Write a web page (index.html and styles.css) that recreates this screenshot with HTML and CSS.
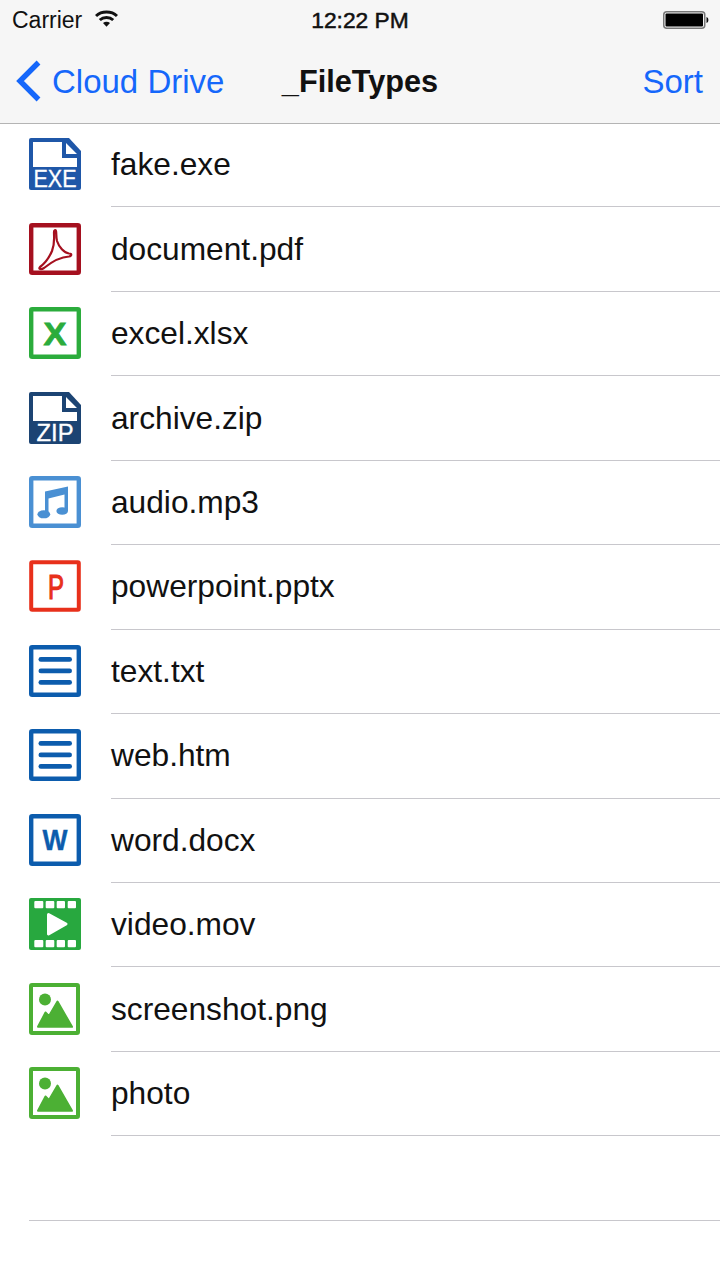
FILE: index.html
```html
<!DOCTYPE html>
<html lang="en">
<head>
    <meta charset="UTF-8">
    <meta name="viewport" content="width=device-width, initial-scale=1.0">
    <title>_FileTypes</title>
    <link rel="stylesheet" href="styles.css">
</head>
<body>

    <svg class="defs" width="0" height="0">
        <symbol id="icon-lines" viewBox="0 0 52 52">
            <rect x="2.200" y="2.200" width="47.600" height="47.600" rx="1" fill="none" stroke="#0c5cad" stroke-width="4.400"/>
            <rect x="9.500" y="12" width="33.500" height="4.800" rx="2.400" fill="#0c5cad"/>
            <rect x="9.500" y="23.500" width="33.500" height="4.800" rx="2.400" fill="#0c5cad"/>
            <rect x="9.500" y="35" width="33.500" height="4.800" rx="2.400" fill="#0c5cad"/>
        </symbol>
        <symbol id="icon-image" viewBox="0 0 52 52">
            <rect x="2" y="2" width="47" height="48" rx="1" fill="none" stroke="#4cb034" stroke-width="4"/>
            <circle cx="16" cy="16.500" r="6" fill="#4cb034"/>
            <path d="M9 43.800 L16.500 29.500 L20 33 L28.500 18.500 L43 43.800 Z" fill="#4cb034" stroke="#4cb034" stroke-width="2" stroke-linejoin="round"/>
        </symbol>
    </svg>

    <div class="screen">
        <header class="topbar">
            <div class="status">
                <div class="status-left">
                    <span>Carrier</span>
                    <svg class="wifi" width="23" height="17" viewBox="0 0 23 17">
                        <path d="M1 6 C6.500 0.800 16.500 0.800 22 6" fill="none" stroke="#111" stroke-width="3"/>
                        <path d="M4.800 10 C8.500 6.700 14.500 6.700 18.200 10" fill="none" stroke="#111" stroke-width="3"/>
                        <path d="M8 13 C10 11.200 13 11.200 15 13 L11.500 16.800 Z" fill="#111"/>
                    </svg>
                </div>
                <div class="status-time">12:22 PM</div>
                <div class="status-right">
                    <svg width="46" height="18" viewBox="0 0 46 18">
                        <rect x="0.750" y="0.750" width="41" height="16.500" rx="3" fill="none" stroke="#777" stroke-width="1.500"/>
                        <rect x="2.500" y="2.500" width="37.500" height="13" rx="1" fill="#000"/>
                        <path d="M43.500 6 C46 6.500 46 11.500 43.500 12 Z" fill="#111"/>
                    </svg>
                </div>
            </div>
            <nav class="navbar">
                <a class="nav-back">
                    <svg class="chevron" width="26" height="42" viewBox="0 0 26 42">
                        <path d="M23.500 2.500 L5 21 L23.500 39.500" fill="none" stroke="#1567fb" stroke-width="5.400"/>
                    </svg>
                    <span>Cloud Drive</span>
                </a>
                <div class="nav-title">_FileTypes</div>
                <a class="nav-action">Sort</a>
            </nav>
        </header>

        <ul class="file-list">
            <li class="file-row">
                <svg class="file-icon" viewBox="0 0 52 52">
                    <path d="M2 0 H40 L52 13 V50 A2 2 0 0 1 50 52 H2 A2 2 0 0 1 0 50 V2 A2 2 0 0 1 2 0 Z" fill="#1f57a8"/>
                    <path d="M4 4 H33 V20 H48 V29 H4 Z M37 5 L48 16 H37 Z" fill="#fff"/>
                    <text class="icon-label" x="26" y="49" text-anchor="middle" font-size="23" textLength="43" lengthAdjust="spacingAndGlyphs" fill="#fff" stroke="#fff" stroke-width="0.300">EXE</text>
                </svg>
                <div class="file-name">fake.exe</div>
            </li>
            <li class="file-row">
                <svg class="file-icon" viewBox="0 0 52 52">
                    <rect x="2.200" y="2.200" width="47.600" height="47.600" rx="1" fill="none" stroke="#a5101f" stroke-width="4.400"/>
                    <path d="M25 9 C25 16 26 20 23 28 C20 35 15 41 11 44 C9 46 12 47 15 45 C20 41 30 34 40 33.500 C43 33 43 30.500 40 30.500 C35 30 30 24 28 18 C27 14 27.500 10 27 8 C26.500 6.500 25 7 25 9 Z" fill="none" stroke="#a5101f" stroke-width="2.200"/>
                </svg>
                <div class="file-name">document.pdf</div>
            </li>
            <li class="file-row">
                <svg class="file-icon" viewBox="0 0 52 52">
                    <rect x="2.200" y="2.200" width="47.600" height="47.600" rx="1" fill="none" stroke="#2bac3c" stroke-width="4.400"/>
                    <text class="icon-label icon-bold" x="26" y="37.500" text-anchor="middle" font-size="32" textLength="23" lengthAdjust="spacingAndGlyphs" fill="#2bac3c" stroke="#2bac3c" stroke-width="0.800">X</text>
                </svg>
                <div class="file-name">excel.xlsx</div>
            </li>
            <li class="file-row">
                <svg class="file-icon" viewBox="0 0 52 52">
                    <path d="M2 0 H40 L52 13 V50 A2 2 0 0 1 50 52 H2 A2 2 0 0 1 0 50 V2 A2 2 0 0 1 2 0 Z" fill="#1c4473"/>
                    <path d="M4 4 H33 V20 H48 V29 H4 Z M37 5 L48 16 H37 Z" fill="#fff"/>
                    <text class="icon-label" x="26" y="49" text-anchor="middle" font-size="23" textLength="37" lengthAdjust="spacingAndGlyphs" fill="#fff" stroke="#fff" stroke-width="0.300">ZIP</text>
                </svg>
                <div class="file-name">archive.zip</div>
            </li>
            <li class="file-row">
                <svg class="file-icon" viewBox="0 0 52 52">
                    <rect x="2.200" y="2.200" width="47.600" height="47.600" rx="1" fill="none" stroke="#4a90d3" stroke-width="4.400"/>
                    <path d="M16 15.500 L39 10.500 V35 H35.500 V18.500 L19.500 22.500 V38.500 H16 Z" fill="#4a90d3"/>
                    <ellipse cx="14.800" cy="38.300" rx="6.400" ry="4" fill="#4a90d3"/>
                    <ellipse cx="33.200" cy="35" rx="5.800" ry="3.800" fill="#4a90d3"/>
                </svg>
                <div class="file-name">audio.mp3</div>
            </li>
            <li class="file-row">
                <svg class="file-icon" viewBox="0 0 52 52">
                    <rect x="2.200" y="2.200" width="47.600" height="47.600" rx="1" fill="none" stroke="#e8301b" stroke-width="4"/>
                    <text class="icon-label" x="27" y="39" text-anchor="middle" font-size="35" textLength="16" lengthAdjust="spacingAndGlyphs" fill="#e8301b" stroke="#e8301b" stroke-width="1.200">P</text>
                </svg>
                <div class="file-name">powerpoint.pptx</div>
            </li>
            <li class="file-row">
                <svg class="file-icon"><use href="#icon-lines"/></svg>
                <div class="file-name">text.txt</div>
            </li>
            <li class="file-row">
                <svg class="file-icon"><use href="#icon-lines"/></svg>
                <div class="file-name">web.htm</div>
            </li>
            <li class="file-row">
                <svg class="file-icon" viewBox="0 0 52 52">
                    <rect x="2.200" y="2.200" width="47.600" height="47.600" rx="1" fill="none" stroke="#0c5cad" stroke-width="4.400"/>
                    <text class="icon-label icon-bold" x="26" y="36" text-anchor="middle" font-size="29" textLength="25" lengthAdjust="spacingAndGlyphs" fill="#0c5cad" stroke="#0c5cad" stroke-width="0.400">W</text>
                </svg>
                <div class="file-name">word.docx</div>
            </li>
            <li class="file-row">
                <svg class="file-icon" viewBox="0 0 52 52">
                    <rect width="52" height="52" rx="2" fill="#28a83f"/>
                    <g fill="#fff">
                        <rect x="5.300" y="3" width="9" height="7.300" rx="1"/>
                        <rect x="16.700" y="3" width="8.600" height="7.300" rx="1"/>
                        <rect x="27.700" y="3" width="8.300" height="7.300" rx="1"/>
                        <rect x="38.700" y="3" width="8.300" height="7.300" rx="1"/>
                        <rect x="5.300" y="42" width="9" height="7.300" rx="1"/>
                        <rect x="16.700" y="42" width="8.600" height="7.300" rx="1"/>
                        <rect x="27.700" y="42" width="8.300" height="7.300" rx="1"/>
                        <rect x="38.700" y="42" width="8.300" height="7.300" rx="1"/>
                    </g>
                    <path d="M19.500 16.500 L37 26 L19.500 36 Z" fill="#fff" stroke="#fff" stroke-width="3" stroke-linejoin="round"/>
                </svg>
                <div class="file-name">video.mov</div>
            </li>
            <li class="file-row">
                <svg class="file-icon"><use href="#icon-image"/></svg>
                <div class="file-name">screenshot.png</div>
            </li>
            <li class="file-row">
                <svg class="file-icon"><use href="#icon-image"/></svg>
                <div class="file-name">photo</div>
            </li>
            <li class="empty-row"></li>
        </ul>
    </div>

</body>
</html>
```

FILE: styles.css
```css
html, body {
    margin: 0;
    padding: 0;
    background-color: #fff;
}
body {
    font-family: "Liberation Sans", Arial, sans-serif;
    color: #111;
}
.defs {
    display: block;
    height: 0;
}
.screen {
    width: 720px;
    height: 1280px;
    overflow: hidden;
}
.topbar {
    height: 123px;
    background-color: #f6f6f6;
    border-bottom: 1px solid #b4b4b4;
}
.status {
    height: 40px;
    padding: 0 12px;
    display: grid;
    grid-template-columns: 1fr auto 1fr;
    align-items: center;
    font-size: 23px;
}
.status-left {
    display: flex;
    align-items: center;
    gap: 13px;
}
.wifi {
    margin-top: -3px;
}
.status-time {
    font-size: 22.8px;
    -webkit-text-stroke: 0.5px #111;
}
.status-right {
    display: flex;
    justify-content: flex-end;
    margin-right: -1px;
    margin-top: -1px;
}
.navbar {
    height: 83px;
    padding: 0 17px;
    display: grid;
    grid-template-columns: 1fr auto 1fr;
    align-items: center;
    font-size: 33px;
}
.nav-back {
    display: flex;
    align-items: center;
    gap: 11px;
    color: #1567fb;
}
.chevron {
    margin: -2px 0 0 -2px;
}
.nav-title {
    font-size: 30.7px;
    font-weight: bold;
    color: #111;
}
.nav-action {
    justify-self: end;
    color: #1567fb;
}
.file-list {
    list-style: none;
    margin: -1px 0 0;
    padding: 0;
}
.file-row {
    height: 84.45px;
    display: flex;
    align-items: center;
    padding-left: 29px;
    gap: 30px;
}
.file-icon {
    width: 52px;
    height: 52px;
    flex-shrink: 0;
    margin-top: -2px;
    overflow: visible;
}
.file-name {
    flex: 1;
    height: 100%;
    box-sizing: border-box;
    display: flex;
    align-items: center;
    font-size: 31.7px;
    border-bottom: 1px solid #c8c7cc;
}
.icon-label {
    font-family: "Liberation Sans", Arial, sans-serif;
}
.icon-bold {
    font-weight: bold;
}
.empty-row {
    height: 84.45px;
    box-sizing: border-box;
    margin-left: 29px;
    border-bottom: 1px solid #c8c7cc;
}
```
